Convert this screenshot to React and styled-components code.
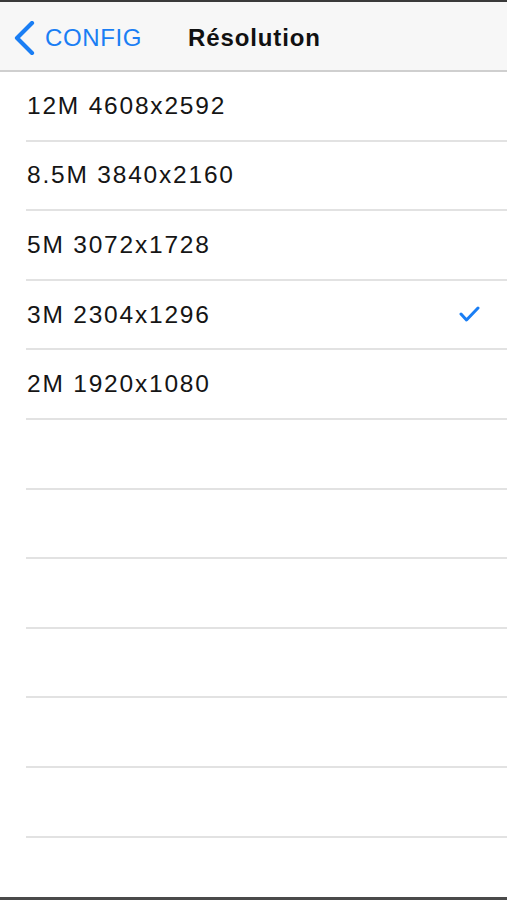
import React from 'react';
import styled, { createGlobalStyle } from 'styled-components';

const GlobalStyle = createGlobalStyle`
	html, body {
		margin: 0;
		padding: 0;
		background: #ffffff;
	}
	body {
		font-family: "Liberation Sans", Arial, sans-serif;
		-webkit-font-smoothing: antialiased;
	}
`

const Screen = styled.div`
	width: 507px;
	height: 900px;
	box-sizing: border-box;
	border-top: 2px solid #3a3a3a;
	border-bottom: 3px solid #4a4a4a;
	background: #ffffff;
	display: flex;
	flex-direction: column;
	overflow: hidden;
`

const NavBar = styled.div`
	height: 70px;
	flex-shrink: 0;
	box-sizing: border-box;
	padding-top: 3px;
	background: #f7f7f7;
	border-bottom: 2px solid #cfcfcf;
	display: flex;
	align-items: center;
`

const BackButton = styled.button`
	display: flex;
	align-items: center;
	gap: 10px;
	padding: 0 0 0 14px;
	border: none;
	background: none;
	color: #1a7ef4;
	font-family: "Liberation Sans", Arial, sans-serif;
	font-size: 24px;
	letter-spacing: 0.6px;
	cursor: pointer;
`

const Title = styled.div`
	margin-left: 46px;
	font-size: 24px;
	font-weight: bold;
	letter-spacing: 0.9px;
	color: #111111;
`

const List = styled.div`
	flex: 1;
	display: flex;
	flex-direction: column;
`

const Row = styled.div`
	height: 69.6px;
	flex-shrink: 0;
	box-sizing: border-box;
	margin-left: 26px;
	padding-right: 26px;
	border-bottom: 2px solid #e2e2e2;
	display: flex;
	align-items: center;
	justify-content: space-between;
	font-size: 24.5px;
	letter-spacing: 1.8px;
	color: #151515;
`

const Label = styled.span`
	padding-left: 1px;
`

const Check = () => (
	<svg width="22" height="18" viewBox="0 0 22 18">
		<path d="M2 8 L7.5 14 L19 2" fill="none" stroke="#1a7ef4" strokeWidth="3" strokeLinecap="round" strokeLinejoin="round" />
	</svg>
)

const Chevron = () => (
	<svg width="21" height="34" viewBox="0 0 21 34">
		<path d="M18 2 L3 17 L18 32" fill="none" stroke="#1a7ef4" strokeWidth="4.2" strokeLinecap="round" strokeLinejoin="round" />
	</svg>
)

const resolutions = [
	'12M 4608x2592',
	'8.5M 3840x2160',
	'5M 3072x1728',
	'3M 2304x1296',
	'2M 1920x1080',
];

const App = () => {
	const selected = '3M 2304x1296';
	const rows = [...resolutions, ...Array(6).fill('')];

	return (
		<>
			<GlobalStyle />
			<Screen>
				<NavBar>
					<BackButton>
						<Chevron />
						CONFIG
					</BackButton>
					<Title>Résolution</Title>
				</NavBar>
				<List>
					{rows.map((r, i) =>
						<Row key={i}>
							<Label>{r}</Label>
							{r == selected && <Check />}
						</Row>
					)}
				</List>
			</Screen>
		</>
	);
}
export default App;
